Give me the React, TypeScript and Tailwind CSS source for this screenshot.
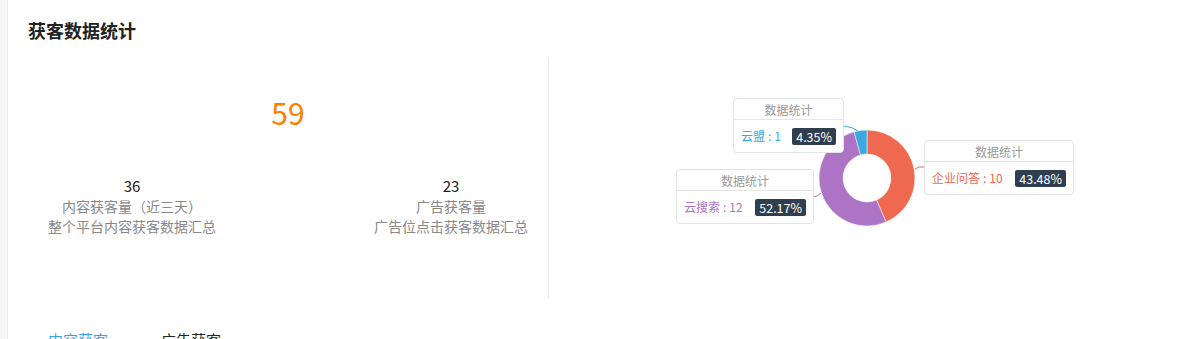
import React from "react";

// 饼图数据（顺时针，从12点方向开始）
const slices = [
  { name: "企业问答", value: 10, pct: "43.48%", color: "#ef6850" },
  { name: "云搜索", value: 12, pct: "52.17%", color: "#ad73c4" },
  { name: "云盟", value: 1, pct: "4.35%", color: "#3ba9e1" },
];

const CX = 318;
const CY = 119;
const R_OUT = 48;
const R_IN = 24;

function pt(r: number, a: number) {
  return [CX + r * Math.sin(a), CY - r * Math.cos(a)];
}

function sector(a0: number, a1: number) {
  const large = a1 - a0 > Math.PI ? 1 : 0;
  const [x0, y0] = pt(R_OUT, a0);
  const [x1, y1] = pt(R_OUT, a1);
  const [x2, y2] = pt(R_IN, a1);
  const [x3, y3] = pt(R_IN, a0);
  return `M${x0} ${y0} A${R_OUT} ${R_OUT} 0 ${large} 1 ${x1} ${y1} L${x2} ${y2} A${R_IN} ${R_IN} 0 ${large} 0 ${x3} ${y3} Z`;
}

function Donut() {
  const total = slices.reduce((s, d) => s + d.value, 0);
  let acc = 0;
  return (
    <svg className="absolute inset-0" width="639" height="240">
      {slices.map((d) => {
        const a0 = (acc / total) * Math.PI * 2;
        acc += d.value;
        const a1 = (acc / total) * Math.PI * 2;
        return <path key={d.name} d={sector(a0, a1)} fill={d.color} stroke="#fff" strokeWidth="0.5" />;
      })}
      {/* 引导线 */}
      <path d="M295 67 Q304 68 309 72" fill="none" stroke="#3ba9e1" strokeWidth="1" />
      <path d="M366 110 L370 108 L375 108" fill="none" stroke="#ef6850" strokeWidth="1" />
      <path d="M264 138 L268 137 L272 134" fill="none" stroke="#ad73c4" strokeWidth="1" />
    </svg>
  );
}

function LabelBox({ left, top, width, name, value, pct, color }: { left: number; top: number; width: number; name: string; value: number; pct: string; color: string }) {
  return (
    <div
      className="absolute bg-white border border-[#e3e3e3] rounded-[4px] text-[12px]"
      style={{ left, top, width }}
    >
      <div className="h-[21px] leading-[21px] text-center text-[#999] border-b border-[#e6e6e6]">数据统计</div>
      <div className="h-[32px] flex items-center justify-between pl-[7px] pr-[7px]">
        <span style={{ color }}>
          {name}
          <span className="mx-[3px]">:</span>
          {value}
        </span>
        <span className="bg-[#2f3f50] text-white rounded-[2px] px-[4px] h-[17px] leading-[17px] text-[12.5px]">{pct}</span>
      </div>
    </div>
  );
}

export default function App() {
  return (
    <div className="flex w-[1196px] h-[339px] overflow-hidden bg-white" style={{ fontFamily: '"Noto Sans CJK SC", sans-serif' }}>
      <div className="w-[8px] bg-[#f7f7f7] border-r border-[#ececec]" />

      <div className="flex-1 pl-[20px] pr-[8px]">
        {/* --- 标题 --- */}
        <h2 className="pt-[17px] text-[18px] leading-[26px] font-bold text-[#222]">获客数据统计</h2>

        <div className="flex mt-[16px] h-[240px]">
          {/* --- 左侧数字 --- */}
          <div className="w-[521px] border-r border-[#ececec] flex flex-col">
            <div className="mt-[33px] text-center text-[30px] leading-[40px] text-[#ff7f00]">59</div>
            <div className="mt-[44px] flex justify-between">
              <div className="w-[208px] text-center">
                <div className="text-[15px] leading-[20px] text-[#222]">36</div>
                <div className="text-[14px] leading-[20px] text-[#888]">内容获客量（近三天）</div>
                <div className="text-[14px] leading-[20px] text-[#888]">整个平台内容获客数据汇总</div>
              </div>
              <div className="w-[194px] text-center">
                <div className="text-[15px] leading-[20px] text-[#222]">23</div>
                <div className="text-[14px] leading-[20px] text-[#888]">广告获客量</div>
                <div className="text-[14px] leading-[20px] text-[#888]">广告位点击获客数据汇总</div>
              </div>
            </div>
          </div>

          {/* --- 右侧饼图 --- */}
          <div className="relative flex-1">
            <Donut />
            <LabelBox left={184} top={39} width={111} name="云盟" value={1} pct="4.35%" color="#3ba9e1" />
            <LabelBox left={127} top={110} width={138} name="云搜索" value={12} pct="52.17%" color="#ad73c4" />
            <LabelBox left={375} top={81} width={150} name="企业问答" value={10} pct="43.48%" color="#ef6850" />
          </div>
        </div>

        {/* --- 标签页 --- */}
        <div className="flex gap-[53px] pl-[20px] mt-[30px] text-[15px] leading-[22px]">
          <span className="text-[#3d9ce8]">内容获客</span>
          <span className="text-[#222]">广告获客</span>
        </div>
      </div>
    </div>
  );
}
